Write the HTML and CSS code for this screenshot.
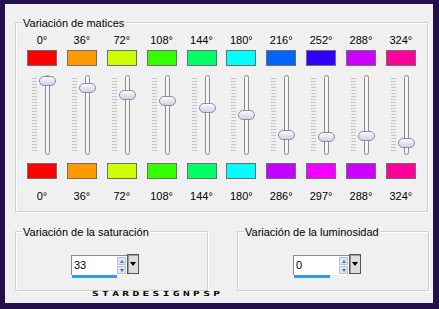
FILE: index.html
```html
<!DOCTYPE html>
<html lang="es">
  <head>
    <meta charset="UTF-8" />
    <meta name="viewport" content="width=device-width, initial-scale=1.0" />
    <title>Variación de matices</title>
    <link rel="stylesheet" href="styles.css">
  </head>
  <body>
    <div class="frame">
      <div class="panel">
        <div class="group group-hues">
          <div class="group-title">Variación de matices</div>
          <div class="hues">
            <div class="hue">
              <div class="deg">0°</div>
              <div class="swatch" style="background:#ff0000"></div>
              <div class="slider"><div class="ticks"></div><div class="track"></div><div class="thumb" style="top:4px"></div></div>
              <div class="swatch" style="background:#ff0000"></div>
              <div class="deg deg-out">0°</div>
            </div>
            <div class="hue">
              <div class="deg">36°</div>
              <div class="swatch" style="background:#ff9900"></div>
              <div class="slider"><div class="ticks"></div><div class="track"></div><div class="thumb" style="top:11px"></div></div>
              <div class="swatch" style="background:#ff9900"></div>
              <div class="deg deg-out">36°</div>
            </div>
            <div class="hue">
              <div class="deg">72°</div>
              <div class="swatch" style="background:#ccff00"></div>
              <div class="slider"><div class="ticks"></div><div class="track"></div><div class="thumb" style="top:18px"></div></div>
              <div class="swatch" style="background:#ccff00"></div>
              <div class="deg deg-out">72°</div>
            </div>
            <div class="hue">
              <div class="deg">108°</div>
              <div class="swatch" style="background:#33ff00"></div>
              <div class="slider"><div class="ticks"></div><div class="track"></div><div class="thumb" style="top:24px"></div></div>
              <div class="swatch" style="background:#33ff00"></div>
              <div class="deg deg-out">108°</div>
            </div>
            <div class="hue">
              <div class="deg">144°</div>
              <div class="swatch" style="background:#00ff66"></div>
              <div class="slider"><div class="ticks"></div><div class="track"></div><div class="thumb" style="top:31px"></div></div>
              <div class="swatch" style="background:#00ff66"></div>
              <div class="deg deg-out">144°</div>
            </div>
            <div class="hue">
              <div class="deg">180°</div>
              <div class="swatch" style="background:#00ffff"></div>
              <div class="slider"><div class="ticks"></div><div class="track"></div><div class="thumb" style="top:38px"></div></div>
              <div class="swatch" style="background:#00ffff"></div>
              <div class="deg deg-out">180°</div>
            </div>
            <div class="hue">
              <div class="deg">216°</div>
              <div class="swatch" style="background:#0066ff"></div>
              <div class="slider"><div class="ticks"></div><div class="track"></div><div class="thumb" style="top:58px"></div></div>
              <div class="swatch" style="background:#c400ff"></div>
              <div class="deg deg-out">286°</div>
            </div>
            <div class="hue">
              <div class="deg">252°</div>
              <div class="swatch" style="background:#3300ff"></div>
              <div class="slider"><div class="ticks"></div><div class="track"></div><div class="thumb" style="top:60px"></div></div>
              <div class="swatch" style="background:#f200ff"></div>
              <div class="deg deg-out">297°</div>
            </div>
            <div class="hue">
              <div class="deg">288°</div>
              <div class="swatch" style="background:#cc00ff"></div>
              <div class="slider"><div class="ticks"></div><div class="track"></div><div class="thumb" style="top:59px"></div></div>
              <div class="swatch" style="background:#cc00ff"></div>
              <div class="deg deg-out">288°</div>
            </div>
            <div class="hue">
              <div class="deg">324°</div>
              <div class="swatch" style="background:#ff0099"></div>
              <div class="slider"><div class="ticks"></div><div class="track"></div><div class="thumb" style="top:66px"></div></div>
              <div class="swatch" style="background:#ff0099"></div>
              <div class="deg deg-out">324°</div>
            </div>
          </div>
        </div>

        <div class="bottom">
          <div class="group group-small">
            <div class="group-title">Variación de la saturación</div>
            <div class="spin">
              <div class="spin-main">
                <div class="spin-field">
                  <div class="spin-value">33</div>
                  <div class="spin-arrows">
                    <div class="spin-btn"><span class="arrow-up"></span></div>
                    <div class="spin-btn"><span class="arrow-down"></span></div>
                  </div>
                </div>
                <div class="spin-bar" style="width:45px"></div>
              </div>
              <div class="spin-drop"><span class="drop-arrow"></span></div>
            </div>
          </div>
          <div class="group group-small group-right">
            <div class="group-title">Variación de la luminosidad</div>
            <div class="spin">
              <div class="spin-main">
                <div class="spin-field">
                  <div class="spin-value">0</div>
                  <div class="spin-arrows">
                    <div class="spin-btn"><span class="arrow-up"></span></div>
                    <div class="spin-btn"><span class="arrow-down"></span></div>
                  </div>
                </div>
                <div class="spin-bar" style="width:36px"></div>
              </div>
              <div class="spin-drop"><span class="drop-arrow"></span></div>
            </div>
          </div>
        </div>

        <div class="mark">STARDESIGNPSP</div>
      </div>
    </div>
  </body>
</html>
```

FILE: styles.css
```css
* {
  box-sizing: border-box;
}
body {
  margin: 0;
  font-family: "Liberation Sans", Arial, sans-serif;
  font-size: 11px;
  color: #000;
}
.frame {
  width: 439px;
  height: 309px;
  background-color: #230f4c;
  padding: 4px 6px 6px 5px;
}
.panel {
  height: 299px;
  background-color: #f0f0f0;
  padding-top: 18px;
  overflow: hidden;
}
.group {
  border: 1px solid #d0d0d0;
  box-shadow: inset 1px 1px #fff, 1px 1px #fff;
}
.group-hues {
  margin: 0 5px 0 10px;
  padding-bottom: 8px;
}
.group-title {
  width: fit-content;
  margin: -6px 0 0 6px;
  padding: 0 1px;
  background-color: #f0f0f0;
  line-height: 13px;
}
.hues {
  display: flex;
  justify-content: space-between;
  width: 389px;
  margin: 4px 0 0 11px;
}
.hue {
  width: 30px;
  display: flex;
  flex-direction: column;
  align-items: center;
}
.deg {
  line-height: 13px;
  white-space: nowrap;
}
.deg-out {
  margin-top: 11px;
}
.swatch {
  width: 30px;
  height: 16px;
  margin-top: 3px;
  border: 1px solid #6f6f6f;
}
.slider {
  position: relative;
  width: 30px;
  height: 88px;
  margin-top: 6px;
  display: flex;
  align-items: flex-start;
}
.ticks {
  width: 5px;
  height: 74px;
  margin: 6px 0 0 5px;
  background: repeating-linear-gradient(#c4c4c4 0 1px, transparent 1px 3px);
}
.track {
  width: 5px;
  height: 80px;
  margin: 3px 0 0 8px;
  border: 1px solid #8c8c8c;
  border-radius: 3px;
  background-color: #f6f6f6;
}
.thumb {
  position: absolute;
  left: 12px;
  width: 17px;
  height: 10px;
  border: 1px solid #8a8ca8;
  border-radius: 5px;
  background: linear-gradient(#fafafe, #cfd1e2);
}

.bottom {
  display: flex;
  gap: 29px;
  margin: 19px 0 0 10px;
}
.group-small {
  width: 193px;
  height: 60px;
}
.group-right {
  width: 192px;
}
.spin {
  display: flex;
  align-items: flex-start;
  margin: 16px 0 0 55px;
}
.spin-main {
  width: 56px;
}
.spin-field {
  display: flex;
  height: 20px;
  background-color: #fff;
  border-left: 1px solid #8a8a8a;
  border-top: 1px solid #8a8a8a;
}
.spin-value {
  flex: 1;
  padding-left: 2px;
  line-height: 18px;
}
.spin-arrows {
  width: 9px;
  margin: 1px 1px 0 0;
  display: flex;
  flex-direction: column;
  gap: 1px;
}
.spin-btn {
  height: 8px;
  background-color: #dfe5ef;
  border: 1px solid #b8c2d4;
  display: flex;
  align-items: center;
  justify-content: center;
}
.arrow-up,
.arrow-down {
  width: 0;
  height: 0;
  border-left: 2.5px solid transparent;
  border-right: 2.5px solid transparent;
}
.arrow-up {
  border-bottom: 3px solid #4a6fb5;
}
.arrow-down {
  border-top: 3px solid #4a6fb5;
}
.spin-bar {
  height: 3px;
  margin-left: 1px;
  background-color: #3399f0;
}
.spin-drop {
  width: 12px;
  height: 20px;
  margin-top: -1px;
  background-color: #dcdcdc;
  border: 1px solid #555;
  box-shadow: inset 1px 1px #999;
  display: flex;
  align-items: center;
  justify-content: center;
}
.drop-arrow {
  width: 0;
  height: 0;
  border-left: 3.5px solid transparent;
  border-right: 3.5px solid transparent;
  border-top: 4px solid #000;
}
.mark {
  width: fit-content;
  margin-left: 87px;
  font: bold 7px/7px "DejaVu Sans Mono", monospace;
  letter-spacing: 2.1px;
  transform: scaleX(1.6);
  transform-origin: left;
}
```
